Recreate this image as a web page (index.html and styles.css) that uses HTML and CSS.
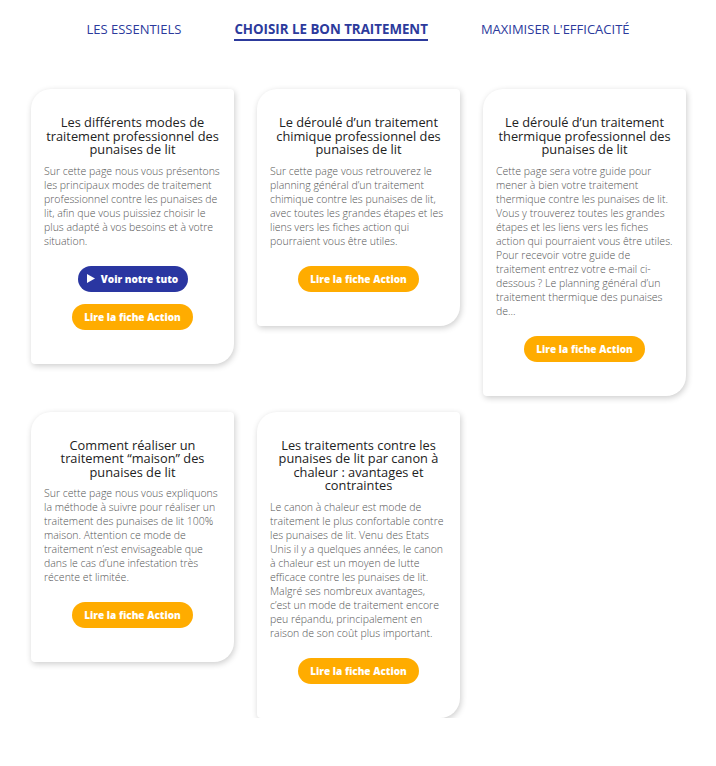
FILE: index.html
```html
<!DOCTYPE html>
<html lang="fr">
<head>
<meta charset="utf-8">
<title>Choisir le bon traitement</title>
<link rel="stylesheet" href="styles.css">
</head>
<body>
<nav class="tabs">
  <a class="tab">LES ESSENTIELS</a>
  <a class="tab active">CHOISIR LE BON TRAITEMENT</a>
  <a class="tab">MAXIMISER L'EFFICACITÉ</a>
</nav>
<main class="grid">
  <article class="card">
    <h3 class="title">Les différents modes de traitement professionnel des punaises de lit</h3>
    <p class="text">Sur cette page nous vous présentons les principaux modes de traitement professionnel contre les punaises de lit, afin que vous puissiez choisir le plus adapté à vos besoins et à votre situation.</p>
    <div class="actions">
      <a class="btn blue"><svg class="play" viewBox="0 0 8 9" width="8" height="9"><path d="M0 0 L8 4.5 L0 9 Z" fill="#fff"/></svg>Voir notre tuto</a>
      <a class="btn orange">Lire la fiche Action</a>
    </div>
  </article>
  <article class="card">
    <h3 class="title">Le déroulé d’un traitement chimique professionnel des punaises de lit</h3>
    <p class="text">Sur cette page vous retrouverez le planning général d’un traitement chimique contre les punaises de lit, avec toutes les grandes étapes et les liens vers les fiches action qui pourraient vous être utiles.</p>
    <div class="actions">
      <a class="btn orange">Lire la fiche Action</a>
    </div>
  </article>
  <article class="card">
    <h3 class="title">Le déroulé d’un traitement thermique professionnel des punaises de lit</h3>
    <p class="text">Cette page sera votre guide pour mener à bien votre traitement thermique contre les punaises de lit. Vous y trouverez toutes les grandes étapes et les liens vers les fiches action qui pourraient vous être utiles. Pour recevoir votre guide de traitement entrez votre e-mail ci-dessous ? Le planning général d’un traitement thermique des punaises de…</p>
    <div class="actions">
      <a class="btn orange">Lire la fiche Action</a>
    </div>
  </article>
  <article class="card">
    <h3 class="title">Comment réaliser un traitement “maison” des punaises de lit</h3>
    <p class="text">Sur cette page nous vous expliquons la méthode à suivre pour réaliser un traitement des punaises de lit 100% maison. Attention ce mode de traitement n’est envisageable que dans le cas d’une infestation très récente et limitée.</p>
    <div class="actions">
      <a class="btn orange">Lire la fiche Action</a>
    </div>
  </article>
  <article class="card">
    <h3 class="title">Les traitements contre les punaises de lit par canon à chaleur : avantages et contraintes</h3>
    <p class="text">Le canon à chaleur est mode de traitement le plus confortable contre les punaises de lit. Venu des Etats Unis il y a quelques années, le canon à chaleur est un moyen de lutte efficace contre les punaises de lit. Malgré ses nombreux avantages, c’est un mode de traitement encore peu répandu, principalement en raison de son coût plus important.</p>
    <div class="actions">
      <a class="btn orange">Lire la fiche Action</a>
    </div>
  </article>
</main>
</body>
</html>
```
FILE: styles.css
```css
* { box-sizing: border-box; }
body {
  margin: 0;
  background: #fff;
  font-family: "Open Sans", "Noto Sans", sans-serif;
  color: #222;
}
.tabs {
  display: flex;
  justify-content: center;
  gap: 53px;
  padding-top: 21px;
  height: 89px;
}
.tab {
  font-size: 13px;
  line-height: 16px;
  color: #2c3a9c;
  height: 20px;
  white-space: nowrap;
}
.tab.active {
  font-weight: 700;
  font-size: 13.3px;
  border-bottom: 2px solid #2c3a9c;
}
.grid {
  width: 656px;
  margin: 0 auto;
  display: grid;
  grid-template-columns: repeat(3, 1fr);
  column-gap: 23px;
  row-gap: 16px;
  align-items: start;
  padding-left: 1px;
}
.card {
  background: #fff;
  border-radius: 20px 4px 20px 4px;
  box-shadow: 1px 2px 6px rgba(0,0,0,0.2);
  padding: 27px 13px 34px;
}
.title {
  margin: 0 0 7px;
  font-size: 12.8px;
  line-height: 13.5px;
  font-weight: 400;
  text-align: center;
  color: #222;
}
.text {
  margin: 0;
  font-size: 10.52px;
  line-height: 14px;
  font-weight: 300;
  color: #555;
}
.actions {
  display: flex;
  flex-direction: column;
  align-items: center;
  gap: 12px;
  margin-top: 18px;
}
.btn {
  display: flex;
  align-items: center;
  justify-content: center;
  height: 26px;
  border-radius: 13px;
  color: #fff;
  font-size: 10px;
  font-weight: 800;
  white-space: nowrap;
}
.btn.blue { background: #2a36a1; width: 110px; gap: 6px; }
.btn.orange { background: #ffac00; width: 121px; }
.play { display: block; }
```
